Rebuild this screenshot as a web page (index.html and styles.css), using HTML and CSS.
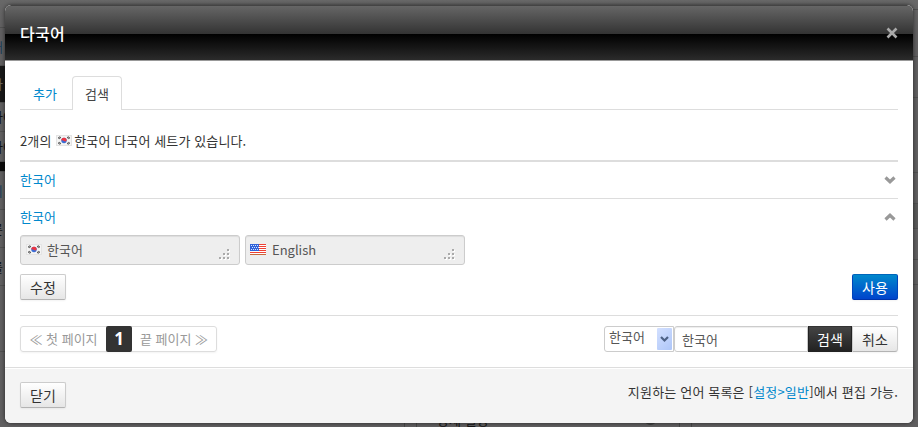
FILE: index.html
```html
<!DOCTYPE html>
<html lang="ko">
<head>
<meta charset="utf-8">
<title>다국어</title>
<link rel="stylesheet" href="styles.css">
</head>
<body>
<svg class="defs" width="0" height="0" aria-hidden="true">
  <symbol id="kr" viewBox="0 0 16 11">
    <rect width="16" height="11" fill="#e4e4e4"/><rect x="1" y="1" width="14" height="9" fill="#f4f4f4"/>
    <path d="M2.500 3.500l2-1.500M11.500 2l2 1.500M2.500 7.500l2 1.500M11.500 9l2-1.500" stroke="#444" stroke-width="2" stroke-dasharray="1.100 .4"/>
    <circle cx="8" cy="5.500" r="2.700" fill="#3a6fd8"/><path d="M5.300 5.500a2.700 2.700 0 0 1 5.400 0q-1.300 1.500-2.700.5t-2.700-.5z" fill="#ee3540"/>
  </symbol>
  <symbol id="us" viewBox="0 0 16 11">
    <rect width="16" height="11" fill="#fff"/>
    <path d="M0 .5h16M0 2.500h16M0 4.500h16M0 6.500h16M0 8.500h16M0 10.500h16" stroke="#ee4035"/>
    <rect width="9" height="7" fill="#2f62d9"/>
    <path d="M1 1.500h8M2 3.500h7M1 5.500h8" stroke="#d5e2ff" stroke-dasharray="1 1"/>
    <path d="M0 10.500h16" stroke="#c9683c"/>
  </symbol>
  <symbol id="chev" viewBox="0 0 12 8"><path d="M1.500 1.500L6 5.700l4.500-4.200" fill="none" stroke="#999" stroke-width="3.200"/></symbol>
  <symbol id="grip" viewBox="0 0 12 12">
    <path d="M9 1h2v2H9zM5 5h2v2H5zM9 5h2v2H9zM1 9h2v2H1zM5 9h2v2H5zM9 9h2v2H9z" fill="#fff"/>
    <path d="M8 0h2v2H8zM4 4h2v2H4zM8 4h2v2H8zM0 8h2v2H0zM4 8h2v2H4zM8 8h2v2H8z" fill="#aaa"/>
  </symbol>
</svg>
<div class="page" aria-hidden="true">
  <div class="side left">
    <i class="r1"></i><i class="r2 blue">새</i><i class="r3">사</i><i class="r4">다어</i><i class="r5">다어</i><i class="r6"></i>
    <i class="r7 blue">회</i><i class="r8">른</i><i class="r9">를</i><i class="r10"></i>
  </div>
  <div class="under"><span class="bar"></span><span class="bar"></span><span class="undertext">상세 설정</span><span class="dot"></span><span class="bar wide"></span><span class="bar"></span></div>
  <div class="side right">
    <i class="q1"></i><i class="q2"></i><i class="q3"></i><i class="q4"></i><i class="q5"></i><i class="q6"></i><i class="q7"></i><i class="q8"></i>
  </div>
</div>
<section class="modal">
  <header class="head">
    <h1>다국어</h1>
    <svg class="close" viewBox="0 0 12 12"><path d="M1.500 1.500l9 9M10.500 1.500l-9 9" stroke="#aaa" stroke-width="2.600"/></svg>
  </header>
  <div class="body">
    <nav class="tabs"><a class="tab">추가</a><a class="tab active">검색</a></nav>
    <p class="summary">2개의 <svg class="flag"><use href="#kr"/></svg><span>한국어 다국어 세트가 있습니다.</span></p>
    <div class="item"><a>한국어</a><svg class="chev"><use href="#chev"/></svg></div>
    <div class="item open"><a>한국어</a><svg class="chev up"><use href="#chev"/></svg></div>
    <div class="fields">
      <div class="field"><svg class="flag"><use href="#kr"/></svg><span>한국어</span><svg class="grip"><use href="#grip"/></svg></div>
      <div class="field us"><svg class="flag"><use href="#us"/></svg><span>English</span><svg class="grip"><use href="#grip"/></svg></div>
    </div>
    <div class="actions"><button class="btn">수정</button><button class="btn primary">사용</button></div>
    <div class="tools">
      <div class="pager"><span class="first">≪ 첫 페이지</span><b>1</b><span class="last">끝 페이지 ≫</span></div>
      <div class="search">
        <div class="select"><span>한국어</span><em><svg viewBox="0 0 9 7"><path d="M1 1l3.500 3.500L8 1" fill="none" stroke="#4d6185" stroke-width="2.200"/></svg></em></div>
        <div class="query">한국어</div>
        <button class="btn dark">검색</button><button class="btn cancel">취소</button>
      </div>
    </div>
  </div>
  <footer class="foot"><button class="btn">닫기</button><p>지원하는 언어 목록은 [<a>설정&gt;일반</a>]에서 편집 가능.</p></footer>
</section>
</body>
</html>
```

FILE: styles.css
```css
* { box-sizing: border-box; }
body {
  margin: 0; width: 918px; height: 427px; overflow: hidden; position: relative;
  background: #605f60; color: #333;
  font: 13px/20px "Noto Sans CJK KR", "Noto Sans", sans-serif;
}
.defs { position: absolute; }
h1, p { margin: 0; }
a { color: #08c; }
svg { display: block; }

.page { position: absolute; inset: 0; display: flex; background: linear-gradient(#686868, #605f60 30px); }
.side { flex: none; width: 5px; display: flex; flex-direction: column; color: #111; }
.left { width: 9px; }
.side i { display: flex; align-items: center; flex: none; font-style: normal; border-bottom: 1px solid #505050; white-space: nowrap; text-indent: -9px; }
.left i { width: 9px; }
.side .blue { color: #1b3d58; }
.r1 { height: 28px; }
.r2 { height: 38px; }
.left .r3 { height: 37px; background: #181818; color: #6c655d; }
.r4 { height: 29px; }
.r5 { height: 30px; }
.r6 { height: 10px; background: #0b0b0b; }
.r7 { height: 38px; }
.r8 { height: 38px; }
.r9 { height: 38px; }
.r10 { height: 66px; }
.q1 { height: 10px; }
.q2 { height: 47px; }
.q3 { height: 41px; }
.q4 { height: 75px; }
.q5 { height: 31px; }
.q6 { height: 25px; background: #595959; }
.q7 { height: 31px; }
.q8 { height: 25px; }
.under { flex: none; width: 310px; height: 20px; margin: 0 auto 0 384px; align-self: flex-end; display: flex; }
.bar { width: 12px; border-right: 1px solid #484848; }
.wide { width: 24px; }
.undertext { color: #161616; margin: 3px 0 0 20px; line-height: 20px; width: 208px; }
.dot { width: 11px; height: 18px; border-radius: 0 0 5px 5px; background: #404040; }

.modal {
  position: absolute; left: 5px; top: 5px; width: 908px; height: 418px;
  background: #fff; border-radius: 6px; overflow: hidden;
  box-shadow: 0 0 4px rgba(0,0,0,.6); display: flex; flex-direction: column;
}
.head {
  height: 56px; flex: none; padding: 0 15px; display: flex; align-items: center; justify-content: space-between;
  background: linear-gradient(#666 0, #333 28px, #000 28px, #2b2b2b 54px);
  border-top: 1px solid #444; border-bottom: 1px solid #999; border-radius: 6px 6px 0 0;
}
.head h1 { font-size: 16px; line-height: 24px; font-weight: 500; letter-spacing: .3px; color: #fff; }
.close { width: 12px; height: 12px; }
.body { flex: 1; padding: 15px 15px 0; }
.tabs { height: 34px; display: flex; border-bottom: 1px solid #ddd; }
.tab { width: 50px; height: 34px; line-height: 35px; text-align: center; margin-right: 2px; }
.tab.active { color: #444; background: #fff; border: 1px solid #ddd; border-bottom: 0; border-radius: 4px 4px 0 0; line-height: 33px; }
.summary { display: flex; align-items: center; height: 50px; padding-top: 11px; white-space: pre; letter-spacing: .12px; }
.flag { width: 16px; height: 11px; }
.summary .flag { margin: 0 2px 0 1px; }
.item { height: 37px; display: flex; align-items: center; justify-content: space-between; border-top: 1px solid #ddd; }
.summary + .item { height: 38px; border-top: 2px solid #ddd; }
.item.open { height: 37px; }
.chev { width: 12px; height: 8px; margin-right: 2px; }
.up { transform: scaleY(-1); }
.fields { display: flex; gap: 5px; }
.field {
  width: 220px; height: 30px; padding: 0 8px 0 5px; display: flex; align-items: center;
  border: 1px solid #ccc; border-radius: 3px; background: #eee; color: #555;
  box-shadow: inset 0 1px 1px rgba(0,0,0,.075);
}
.field .flag { margin: 0 5px 2px 0; }
.field.us { padding-left: 4px; }
.field.us .flag { margin-right: 6px; }
.grip { width: 12px; height: 12px; margin: 10px 0 0 auto; }
.actions { display: flex; justify-content: space-between; margin-top: 9px; }
.btn {
  width: 46px; height: 26px; padding: 0; text-align: center; font: 14px/24px "Noto Sans CJK KR", sans-serif;
  color: #333; border: 1px solid #ccc; border-bottom-color: #b3b3b3; border-radius: 2px;
  background: linear-gradient(#fff, #e6e6e6); box-shadow: 0 1px 2px rgba(0,0,0,.05);
}
.primary { color: #fff; background: linear-gradient(#08c, #04c); border-color: #06b #04b #03a; }
.tools { margin-top: 15px; padding-top: 10px; border-top: 1px solid #ddd; display: flex; justify-content: space-between; }
.pager { width: 197px; height: 26px; display: flex; border: 1px solid #ddd; border-radius: 3px; line-height: 24px; color: #999; box-shadow: 0 1px 2px rgba(0,0,0,.05); white-space: nowrap; }
.pager span { flex: none; text-align: center; }
.first { width: 85px; }
.last { width: 84px; }
.pager b { width: 26px; height: 26px; margin-top: -1px; background: #333; color: #fff; text-align: center; border-radius: 2px; font: bold 17px/26px "Open Sans", sans-serif; }
.search { display: flex; }
.select { width: 70px; height: 26px; display: flex; justify-content: space-between; padding: 1px 1px 0 5px; border: 1px solid #ccc; border-radius: 3px 0 0 3px; color: #555; line-height: 17px; }
.select span { margin-left: -1px; }
.select em { width: 15px; height: 22px; background: linear-gradient(135deg, #d3e0ff, #aec6f8); border-radius: 1px; display: flex; align-items: center; justify-content: center; }
.select em svg { width: 9px; height: 7px; }
.query { width: 134px; height: 26px; padding-left: 7px; border: 1px solid #ccc; border-radius: 3px 0 0 3px; line-height: 25px; color: #555; box-shadow: inset 0 1px 1px rgba(0,0,0,.075); }
.dark { width: 44px; color: #fff; background: linear-gradient(#444, #222); border-color: #333 #222 #222; border-radius: 0; }
.cancel { border-radius: 0 3px 3px 0; }
.foot { flex: none; height: 56px; padding: 14px 15px 0; display: flex; justify-content: space-between; border-top: 1px solid #ddd; background: #f4f4f4; box-shadow: inset 0 1px 0 #fff; }
.foot p { letter-spacing: .18px; }
```
